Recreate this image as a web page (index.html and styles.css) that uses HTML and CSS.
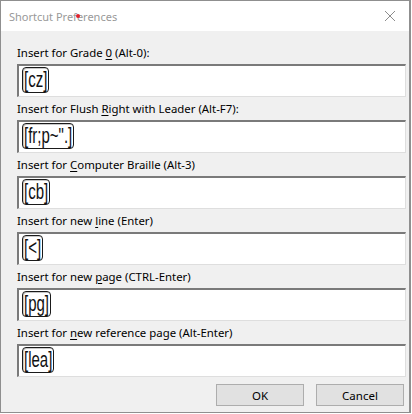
FILE: index.html
```html
<!DOCTYPE html>
<html>
<head>
<meta charset="utf-8">
<link rel="stylesheet" href="styles.css">
</head>
<body>
<div class="window">
  <div class="titlebar">
    <span class="title">Shortcut Preferences</span>
    <span class="dot"></span>
    <svg class="close" width="12" height="12" viewBox="0 0 12 12"><path d="M1 1 L11 11 M11 1 L1 11" stroke="#8c8c8c" stroke-width="1" fill="none"/></svg>
  </div>
  <div class="content">
    <div class="field">
      <div class="label">Insert for Grade <u>0</u> (Alt-0):</div>
      <div class="input"><span class="token"><span class="tt">[cz]</span></span></div>
    </div>
    <div class="field">
      <div class="label">Insert for Flush <u>R</u>ight with Leader (Alt-F7):</div>
      <div class="input"><span class="token"><span class="tt">[fr;p~".]</span></span></div>
    </div>
    <div class="field">
      <div class="label">Insert for <u>C</u>omputer Braille (Alt-3)</div>
      <div class="input"><span class="token"><span class="tt">[cb]</span></span></div>
    </div>
    <div class="field">
      <div class="label">Insert for new <u>l</u>ine (Enter)</div>
      <div class="input"><span class="token"><span class="tt">[&lt;]</span></span></div>
    </div>
    <div class="field">
      <div class="label">Insert for new <u>p</u>age (CTRL-Enter)</div>
      <div class="input"><span class="token"><span class="tt">[pg]</span></span></div>
    </div>
    <div class="field">
      <div class="label">Insert for <u>n</u>ew reference page (Alt-Enter)</div>
      <div class="input"><span class="token"><span class="tt">[lea]</span></span></div>
    </div>
    <div class="buttons">
      <button class="btn">OK</button>
      <button class="btn">Cancel</button>
    </div>
  </div>
</div>
</body>
</html>
```
FILE: styles.css
```css
html, body {
  margin: 0;
  padding: 0;
  background: #ffffff;
}
.window {
  width: 408px;
  height: 411px;
  border: 1px solid #8f8f8f;
  border-right-width: 2px;
  background: #f0f0f0;
  font-family: "Noto Sans", "Open Sans", sans-serif;
  font-size: 11.4px;
  color: #000;
  display: flex;
  flex-direction: column;
}
.titlebar {
  height: 30px;
  background: #ffffff;
  display: flex;
  align-items: center;
  padding-left: 8px;
  position: relative;
}
.title {
  color: #999999;
  font-size: 11px;
}
.dot {
  position: absolute;
  left: 75px;
  top: 13px;
  width: 4px;
  height: 4px;
  border-radius: 50%;
  background: #e0202a;
}
.close {
  position: absolute;
  right: 13px;
  top: 9px;
}
.content {
  padding: 13px 5px 0 16px;
  display: flex;
  flex-direction: column;
}
.field {
  display: flex;
  flex-direction: column;
  height: 56px;
}
.label {
  height: 18px;
  line-height: 18px;
  margin-bottom: 2px;
  white-space: nowrap;
}
.label u {
  text-decoration-thickness: 1px;
  text-underline-offset: 2px;
}
.input {
  height: 29px;
  width: 383px;
  background: #ffffff;
  border-top: 2px solid #7a7a7a;
  border-left: 2px solid #7a7a7a;
  border-right: 1px solid #dedede;
  border-bottom: 1px solid #dedede;
  padding: 1px 0 0 3px;
  box-sizing: content-box;
  display: flex;
  align-items: flex-start;
}
.token {
  display: inline-block;
  height: 24px;
  line-height: 24px;
  border: 1px solid #1a1a1a;
  border-radius: 4px;
  box-shadow: inset 1px 1px 0 #c8c8c8;
  padding: 0 1px;
  font-family: "Liberation Sans", Arial, sans-serif;
  font-size: 15px;
  color: #111;
}
.tt {
  display: inline-block;
  transform: scaleY(1.45);
  transform-origin: 50% 55%;
}
.buttons {
  display: flex;
  justify-content: flex-end;
  gap: 12px;
  margin-top: 4px;
}
.btn {
  width: 88px;
  height: 22px;
  background: #e1e1e1;
  border: 1px solid #adadad;
  font-family: "Noto Sans", "Open Sans", sans-serif;
  font-size: 11.5px;
  color: #000;
  padding: 0;
}
```
